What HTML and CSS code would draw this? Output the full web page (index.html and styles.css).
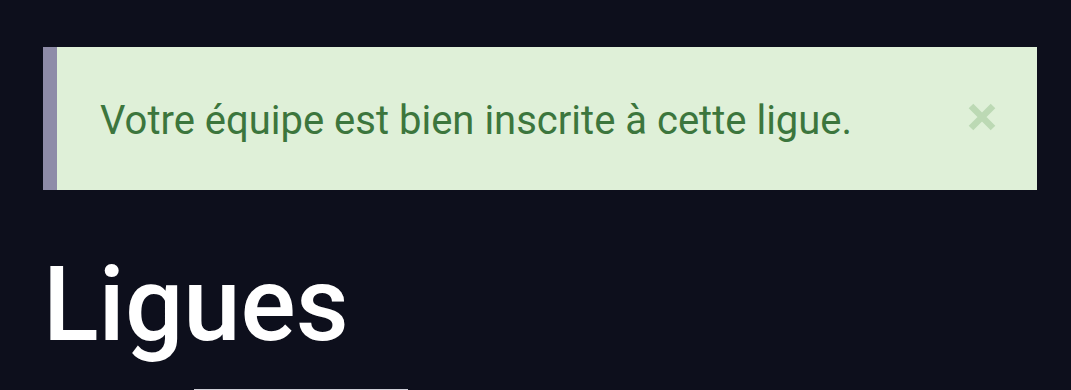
FILE: index.html
```html
<!DOCTYPE html>
<html lang="fr">
<head>
<meta charset="utf-8">
<link rel="stylesheet" href="styles.css">
</head>
<body>
<main class="page">
  <div class="alert">
    <p class="alert-text">Votre équipe est bien inscrite à cette ligue.</p>
    <button class="alert-close" aria-label="Fermer">
      <svg width="30" height="30" viewBox="0 0 30 30"><path d="M4 4 L26 26 M26 4 L4 26" stroke="currentColor" stroke-width="6.5" stroke-linecap="butt"/></svg>
    </button>
  </div>
  <h1 class="title">Ligues</h1>
  <div class="tabs"><div class="tab"></div></div>
</main>
</body>
</html>
```
FILE: styles.css
```css
html, body {
  margin: 0;
  padding: 0;
  background: #0d0f1c;
  height: 100%;
  overflow: hidden;
}
.page {
  padding: 47px 34px 0 43px;
  font-family: Roboto, "Noto Sans", sans-serif;
}
.alert {
  display: flex;
  align-items: center;
  justify-content: space-between;
  height: 143px;
  box-sizing: border-box;
  background: #dff0d8;
  border-left: 14px solid #8e8ca8;
  padding: 4px 40px 0 43px;
}
.alert-text {
  margin: 0;
  color: #3c763d;
  font-size: 40px;
}
.alert-close {
  background: none;
  border: 0;
  padding: 0;
  color: #bcd9b4;
  display: flex;
  margin-top: -8px;
}
.title {
  margin: 63px 0 0 0;
  color: #ffffff;
  font-weight: 500;
  font-size: 103px;
  line-height: 1;
}
.tabs {
  padding-left: 151px;
  margin-top: 33px;
}
.tab {
  width: 214px;
  height: 40px;
  border-top: 2px solid #d0d0d8;
}
```
